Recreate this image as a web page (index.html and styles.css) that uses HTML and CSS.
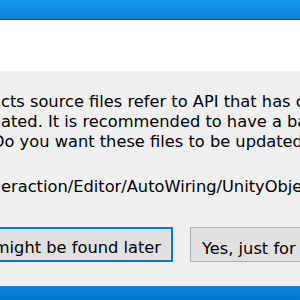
FILE: index.html
```html
<!DOCTYPE html>
<html lang="en">
  <head>
    <meta charset="UTF-8" />
    <meta name="viewport" content="width=device-width, initial-scale=1.0" />
    <title>Script Updating Consent</title>
    <link rel="stylesheet" href="styles.css">
  </head>
  <body>
    <div class="window">
      <div class="titlebar"></div>

      <div class="banner"></div>

      <div class="content">
        <div class="message">
          <p class="line">cts source files refer to API that has changed. These can be</p>
          <p class="line">ated. It is recommended to have a backup of the project</p>
          <p class="line line-start">Do you want these files to be updated?</p>
        </div>

        <p class="path">eraction/Editor/AutoWiring/UnityObjectExtensions.cs</p>

        <div class="actions">
          <div class="default-slot">
            <button class="btn btn-default">Yes, for these and other files that might be found later</button>
          </div>
          <button class="btn">Yes, just for these files</button>
        </div>
      </div>

      <div class="taskbar"></div>
    </div>
  </body>
</html>
```

FILE: styles.css
```css
* {
  margin: 0;
  padding: 0;
  box-sizing: border-box;
}

body {
  font-family: "DejaVu Sans", Verdana, sans-serif;
  font-size: 16.25px;
  color: #000;
  background: #f0f0f0;
  width: 300px;
  height: 300px;
  overflow: hidden;
}

.window {
  width: 300px;
  height: 300px;
  overflow: hidden;
  display: flex;
  flex-direction: column;
}

.titlebar {
  height: 20px;
  flex: none;
  background: linear-gradient(to bottom, #1896ec, #0a82de);
  border-bottom: 1px solid #1f4f7a;
}

.banner {
  height: 51px;
  flex: none;
  background: #fff;
}

.content {
  height: 214px;
  flex: none;
  background: #f0f0f0;
  padding-top: 21px;
  padding-left: 1px;
}

.line,
.path {
  line-height: 20px;
  white-space: nowrap;
}

.line-start {
  text-indent: -9px;
}

.path {
  margin-top: 25px;
}

.actions {
  display: flex;
  gap: 17px;
  margin-top: 30px;
  margin-left: -1px;
}

/* the default button overflows to the left, its right edge stays put */
.default-slot {
  width: 173px;
  flex: none;
  display: flex;
  justify-content: flex-end;
}

.btn {
  flex: none;
  height: 35px;
  padding: 8px 11px 0;
  font-family: inherit;
  font-size: 16.25px;
  line-height: 20px;
  color: #000;
  white-space: nowrap;
  background: #e1e1e1;
  border: 1px solid #adadad;
  text-align: left;
}

.btn-default {
  border: 2px solid #0078d7;
  padding: 7px 10px 0 11px;
}

.taskbar {
  flex: 1;
  background: linear-gradient(to bottom, #0a86e0, #0078d4);
  border-top: 1px solid #fdfdfd;
}
```
